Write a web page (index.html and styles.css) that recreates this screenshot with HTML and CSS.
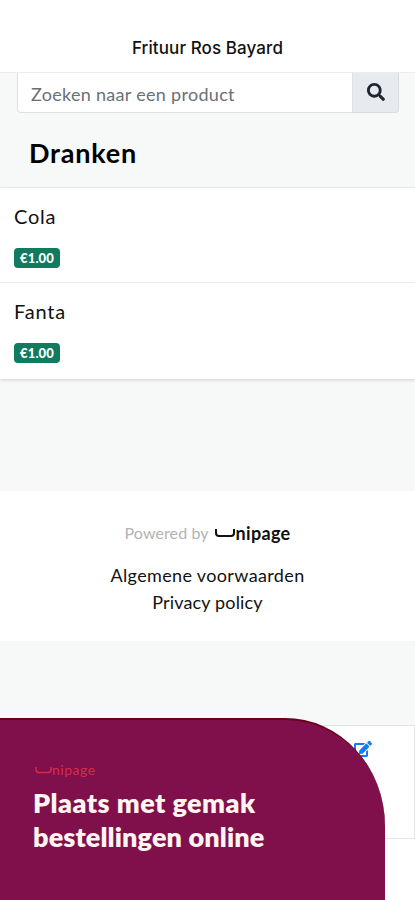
FILE: index.html
```html
<!DOCTYPE html>
<html lang="nl">
<head>
<meta charset="utf-8">
<meta name="viewport" content="width=device-width, initial-scale=1">
<title>Frituur Ros Bayard</title>
<link rel="stylesheet" href="styles.css">
</head>
<body>
<header class="topbar"><h1>Frituur Ros Bayard</h1></header>
<main>
  <section class="menu-head">
    <div class="search">
      <div class="field"><span>Zoeken naar een product</span></div>
      <button class="search-btn" aria-label="Zoeken">
        <svg width="18" height="18" viewBox="0 0 512 512"><path fill="#20262c" d="M505 442.700 405.300 343c-4.500-4.500-10.600-7-17-7H372c27.600-35.300 44-79.700 44-128C416 93.100 322.900 0 208 0S0 93.100 0 208s93.100 208 208 208c48.300 0 92.700-16.400 128-44v16.300c0 6.400 2.500 12.500 7 17l99.700 99.700c9.400 9.400 24.600 9.400 33.900 0l28.300-28.300c9.400-9.400 9.400-24.600.1-34zM208 336c-70.700 0-128-57.200-128-128 0-70.700 57.200-128 128-128 70.700 0 128 57.200 128 128 0 70.700-57.200 128-128 128z"/></svg>
      </button>
    </div>
    <h2>Dranken</h2>
  </section>
  <ul class="products">
    <li><span class="name">Cola</span><span class="price">€1.00</span></li>
    <li><span class="name">Fanta</span><span class="price">€1.00</span></li>
  </ul>
  <footer class="footer">
    <div class="powered">
      <span class="by">Powered by</span>
      <span class="brand"><svg class="cup" width="21" height="10" viewBox="0 0 21 10"><path d="M1 1v4q0 3 3 3h12q3 0 3-3V1" fill="none" stroke="currentColor" stroke-width="2"/></svg><span>nipage</span></span>
    </div>
    <a class="terms">Algemene voorwaarden</a>
    <a class="privacy">Privacy policy</a>
  </footer>
  <section class="card">
    <svg width="18" height="16" viewBox="0 0 576 512"><path fill="#117cf5" d="M402.600 83.200l90.200 90.200c3.800 3.800 3.800 10 0 13.800L274.400 405.600l-92.800 10.300c-12.400 1.400-22.900-9.100-21.500-21.500l10.300-92.800L388.800 83.200c3.800-3.800 10-3.800 13.800 0zm162-22.900l-48.800-48.800c-15.200-15.200-39.900-15.200-55.200 0l-35.400 35.400c-3.800 3.800-3.800 10 0 13.800l90.200 90.200c3.800 3.800 10 3.800 13.800 0l35.400-35.400c15.200-15.300 15.200-40 0-55.200zM384 346.200V448H64V128h229.800c3.200 0 6.200-1.300 8.500-3.500l40-40c7.600-7.600 2.200-20.500-8.500-20.500H48C21.500 64 0 85.500 0 112v352c0 26.500 21.500 48 48 48h352c26.500 0 48-21.500 48-48V306.200c0-10.700-12.900-16-20.500-8.500l-40 40c-2.200 2.300-3.500 5.300-3.500 8.500z"/></svg>
  </section>
</main>
<aside class="banner">
  <div class="brand small"><svg class="cup" width="17" height="8" viewBox="0 0 17 8"><path d="M1 1v2.500q0 3 3 3h9q3 0 3-3V1" fill="none" stroke="currentColor" stroke-width="1.400"/></svg><span>nipage</span></div>
  <p><span class="l1">Plaats met gemak</span><br><span class="l2">bestellingen online</span></p>
</aside>
</body>
</html>
```
FILE: styles.css
```css
* { box-sizing: border-box; }
body {
  margin: 0;
  position: relative;
  height: 900px;
  overflow: hidden;
  background: #fff;
  color: #111;
  font-family: Lato, "Open Sans", sans-serif;
}
h1, h2, p, ul { margin: 0; padding: 0; }
.topbar {
  height: 73px;
  padding-top: 37px;
  border-bottom: 1px solid #eaeded;
  text-align: center;
}
h1 { font: 500 17px/22px Inter, sans-serif; letter-spacing: 0.1px; }
main { background: #f7f9f9; }
.menu-head { height: 115px; padding: 0 16px 0 17px; border-bottom: 1px solid #eceeee; }
.search { display: flex; height: 40px; }
.field {
  flex: 1;
  padding-left: 13px;
  font-size: 18px;
  line-height: 42px;
  letter-spacing: 0.3px;
  color: #697077;
  background: #fff;
  border: 1px solid #dde1e4;
  border-top: 0;
  border-radius: 0 0 0 4px;
}
.search-btn {
  width: 46px;
  padding: 0 0 1px;
  display: flex;
  align-items: center;
  justify-content: center;
  background: #e7eaef;
  border: 1px solid #d8dce1;
  border-top: 0;
  border-left: 0;
  border-radius: 0 0 4px 0;
}
h2 { padding: 23px 0 0 12px; font-size: 27px; line-height: 34px; font-weight: 700; letter-spacing: 0.8px; color: #000; }
.products { list-style: none; background: #fff; box-shadow: 0 1px 3px #ccd0d0; }
.products li {
  height: 94px;
  padding: 15px 14px 0;
  display: flex;
  flex-direction: column;
  align-items: flex-start;
  gap: 19px;
}
.products li + li { height: 97px; border-top: 1px solid #e8eaea; }
.name { font-size: 20px; line-height: 26px; letter-spacing: 0.8px; }
.price {
  width: 46px;
  height: 20px;
  border-radius: 4px;
  background: #117b60;
  color: #fff;
  font-size: 13px;
  line-height: 21px;
  font-weight: 900;
  letter-spacing: 0.1px;
  text-align: center;
}
.footer {
  height: 150px;
  margin-top: 112px;
  padding-top: 31px;
  display: flex;
  flex-direction: column;
  align-items: center;
  background: #fff;
  font-size: 18px;
  line-height: 27px;
}
.terms { letter-spacing: 0.36px; }
.privacy { letter-spacing: 0.15px; }
.powered { display: flex; gap: 6px; height: 40px; line-height: 22px; }
.by { font-size: 16px; letter-spacing: 0.1px; color: #b3b3b3; }
.brand { display: flex; align-items: center; font-size: 18px; font-weight: 700; letter-spacing: 0.3px; }
.powered .brand { height: 22px; }
.card {
  height: 114px;
  margin: 84px 0 0;
  padding: 15px 42px 0 0;
  display: flex;
  justify-content: flex-end;
  align-items: flex-start;
  background: #fff;
  border: 1px solid #e2e5e5;
}
.banner {
  position: absolute;
  left: 0;
  top: 718px;
  width: 385px;
  height: 182px;
  padding: 41px 33px 0;
  border-top: 2px solid #6c001b;
  border-top-right-radius: 100px 108px;
  background: #7f104b;
  color: #fff5f0;
}
.small { height: 18px; padding-left: 2px; font-size: 14px; line-height: 18px; font-weight: 400; letter-spacing: 0.5px; color: #d62d49; }
.banner p { padding-top: 7px; font-size: 27px; line-height: 34px; font-weight: 800; white-space: nowrap; }
.l1 { letter-spacing: 0.45px; }
.l2 { letter-spacing: 0.12px; }
```
